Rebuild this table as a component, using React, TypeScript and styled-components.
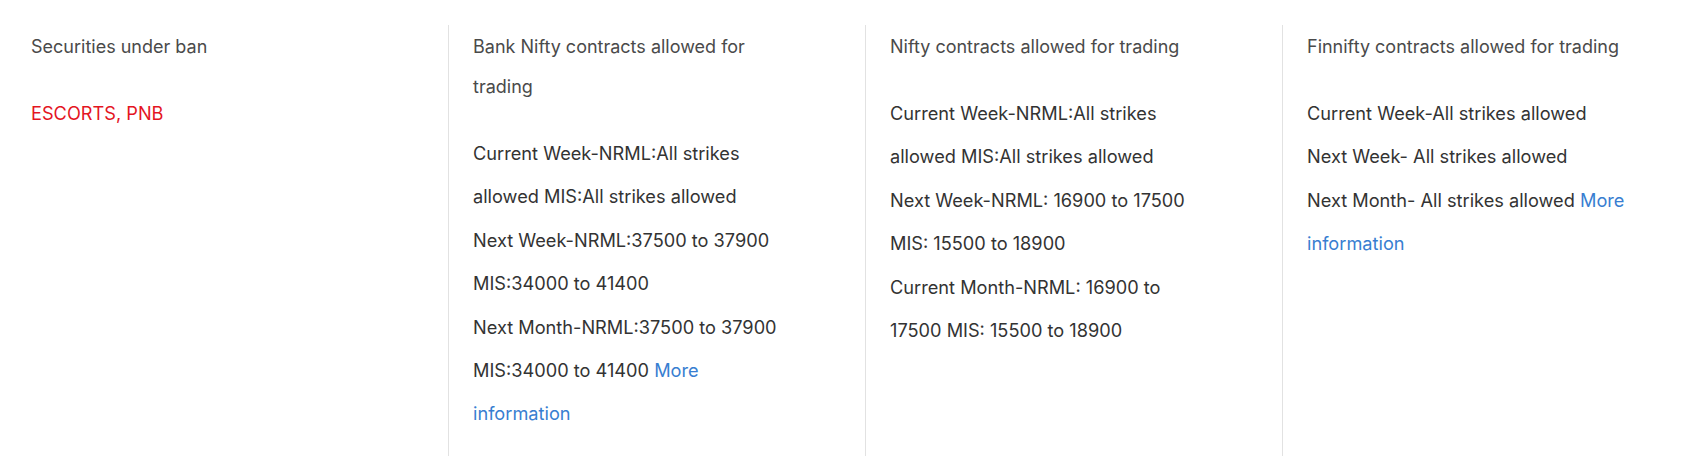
import React from "react";
import styled, { createGlobalStyle } from "styled-components";

const GlobalStyle = createGlobalStyle`
  html, body {
    margin: 0;
    padding: 0;
    background: #ffffff;
  }
  body {
    font-family: Inter, "Noto Sans", "Liberation Sans", sans-serif;
    -webkit-font-smoothing: antialiased;
  }
`;

const Grid = styled.div`
  display: grid;
  grid-template-columns: repeat(4, 1fr);
  padding: 25px 8px 18px 31px;
`;

const Column = styled.div<{ $first?: boolean }>`
  padding: 2px 71px 20px ${(p) => (p.$first ? "0" : "24px")};
  border-left: ${(p) => (p.$first ? "none" : "1px solid #e2e2e2")};
  min-width: 0;
`;

const Title = styled.p`
  margin: 0 0 25px;
  font-size: 18px;
  line-height: 40px;
  color: #4a4a4a;
`;

const Body = styled.p<{ $danger?: boolean }>`
  margin: 0;
  font-size: 18.2px;
  line-height: 43.4px;
  color: ${(p) => (p.$danger ? "#e4151f" : "#333333")};
`;

const Line = styled.span`
  display: block;
`;

const Link = styled.a`
  color: #387ed1;
  text-decoration: none;
`;

export default function App() {
  return (
    <>
      <GlobalStyle />
      <Grid>
        <Column $first>
          <Title>Securities under ban</Title>
          <Body $danger>ESCORTS, PNB</Body>
        </Column>
        <Column>
          <Title>Bank Nifty contracts allowed for trading</Title>
          <Body>
            <Line>Current Week-NRML:All strikes allowed MIS:All strikes allowed</Line>
            <Line>Next Week-NRML:37500 to 37900 MIS:34000 to 41400</Line>
            <Line>
              Next Month-NRML:37500 to 37900 MIS:34000 to 41400{" "}
              <Link href="#">More information</Link>
            </Line>
          </Body>
        </Column>
        <Column>
          <Title>Nifty contracts allowed for trading</Title>
          <Body>
            <Line>Current Week-NRML:All strikes allowed MIS:All strikes allowed</Line>
            <Line>Next Week-NRML: 16900 to 17500 MIS: 15500 to 18900</Line>
            <Line>Current Month-NRML: 16900 to 17500 MIS: 15500 to 18900</Line>
          </Body>
        </Column>
        <Column>
          <Title>Finnifty contracts allowed for trading</Title>
          <Body>
            <Line>Current Week-All strikes allowed</Line>
            <Line>Next Week- All strikes allowed</Line>
            <Line>
              Next Month- All strikes allowed <Link href="#">More information</Link>
            </Line>
          </Body>
        </Column>
      </Grid>
    </>
  );
}
